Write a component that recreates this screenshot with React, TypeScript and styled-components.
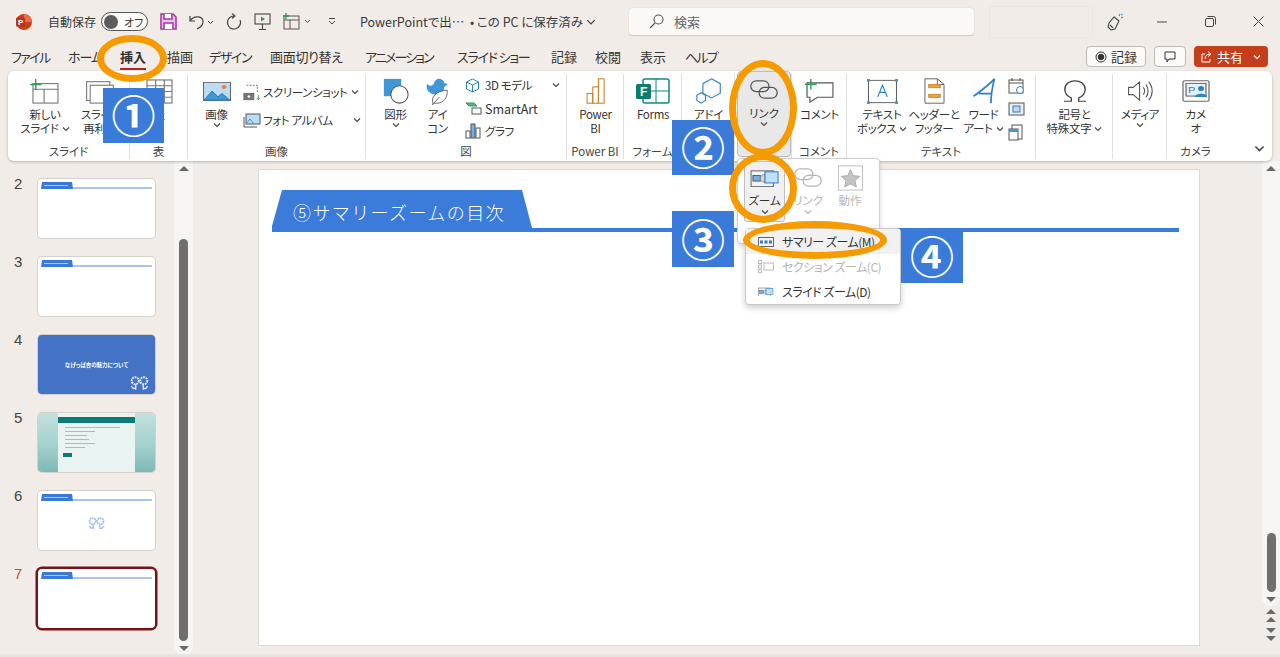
import React from "react";
import styled, { createGlobalStyle } from "styled-components";

const GlobalStyle = createGlobalStyle`
  html, body { margin: 0; padding: 0; height: 100%; overflow: hidden; }
  body {
    background: #f1ece7;
    color: #333;
    font-family: "Noto Sans CJK JP", "Noto Sans", sans-serif;
    font-feature-settings: "palt";
    font-size: 12px;
  }
`;

const Page = styled.div`
  position: relative;
  width: 1280px;
  height: 657px;
  overflow: hidden;
  display: flex;
  flex-direction: column;
`;

/* title bar */
const TitleBar = styled.div`
  height: 43px;
  display: flex;
  align-items: center;
  flex-shrink: 0;
`;
const TitleItem = styled.div<{ $w: number; $size?: number; $center?: boolean }>`
  width: ${(p) => p.$w}px;
  flex-shrink: 0;
  display: flex;
  align-items: center;
  justify-content: ${(p) => (p.$center ? "center" : "flex-start")};
  font-size: ${(p) => p.$size ?? 12}px;
  white-space: nowrap;
  color: #3a3a3a;
`;
const Toggle = styled.div`
  width: 47px;
  height: 19px;
  box-sizing: border-box;
  border: 1px solid #555;
  border-radius: 10px;
  background: #fbfaf9;
  display: flex;
  align-items: center;
  gap: 6px;
  padding-left: 2px;
  font-size: 11px;
  &::before {
    content: "";
    width: 14px;
    height: 14px;
    border-radius: 50%;
    background: #5c5c5c;
  }
`;
const SearchBox = styled.div`
  width: 345px;
  height: 28px;
  box-sizing: border-box;
  background: #faf9f8;
  border-radius: 4px;
  border-bottom: 1px solid #d4d0cc;
  box-shadow: 0 0 1px #bbb;
  display: flex;
  align-items: center;
  gap: 10px;
  padding-left: 20px;
  color: #666;
  font-size: 13px;
`;
const GhostBox = styled.div`
  width: 102px;
  height: 30px;
  border: 1px solid #ebe6e1;
`;

/* tabs */
const TabBar = styled.div`
  height: 27px;
  display: flex;
  align-items: center;
  padding: 0 12px 1px 11px;
  flex-shrink: 0;
`;
const Tab = styled.div<{ $w: number; $ls: number; $active?: boolean }>`
  position: relative;
  width: ${(p) => p.$w}px;
  flex-shrink: 0;
  font-size: 13px;
  letter-spacing: ${(p) => p.$ls}px;
  white-space: nowrap;
  font-weight: ${(p) => (p.$active ? 700 : 400)};
  color: #333;
  ${(p) =>
    p.$active &&
    `&::after { content: ""; position: absolute; left: 0; top: 21px; width: 26px; height: 2px; background: #b7261a; }`}
`;
const TabActions = styled.div`
  margin-left: auto;
  display: flex;
  align-items: center;
  gap: 8px;
`;
const OutlineButton = styled.div<{ $w: number }>`
  width: ${(p) => p.$w}px;
  height: 21px;
  box-sizing: border-box;
  background: #fbfaf9;
  border: 1px solid #bdb9b5;
  border-radius: 4px;
  display: flex;
  align-items: center;
  justify-content: center;
  gap: 4px;
  font-size: 13px;
`;
const ShareButton = styled.div`
  width: 74px;
  height: 21px;
  box-sizing: border-box;
  background: #c43e1c;
  color: #fff;
  border-radius: 4px;
  display: flex;
  align-items: center;
  padding-left: 7px;
  gap: 4px;
  font-size: 13px;
`;

/* ribbon */
const Ribbon = styled.div`
  height: 90px;
  margin: 0 8px;
  flex-shrink: 0;
  background: #fff;
  border-radius: 6px;
  box-shadow: 0 1px 3px rgba(0, 0, 0, 0.25);
  display: flex;
  position: relative;
`;
const Group = styled.div<{ $w: number; $last?: boolean }>`
  width: ${(p) => p.$w}px;
  flex-shrink: 0;
  height: 85px;
  margin-top: 3px;
  box-sizing: border-box;
  border-right: ${(p) => (p.$last ? "none" : "1px solid #e1dfdd")};
  display: flex;
  flex-direction: column;
`;
const GroupBody = styled.div<{ $pad?: number }>`
  flex: 1;
  display: flex;
  padding-left: ${(p) => p.$pad ?? 0}px;
  min-height: 0;
`;
const GroupLabel = styled.div`
  height: 15px;
  line-height: 15px;
  text-align: center;
  font-size: 11.5px;
  color: #444;
  white-space: nowrap;
  overflow: hidden;
`;
const Tool = styled.div<{ $w: number }>`
  width: ${(p) => p.$w}px;
  flex-shrink: 0;
  display: flex;
  flex-direction: column;
  align-items: center;
  padding-top: 3px;
  font-size: 11.5px;
  line-height: 14px;
  letter-spacing: -0.3px;
  color: #333;
  text-align: center;
  white-space: nowrap;
`;
const ToolIcon = styled.div`
  height: 28px;
  display: flex;
  align-items: center;
  justify-content: center;
  margin-bottom: 2px;
`;
const ToolArrow = styled.span`
  display: inline-flex;
  margin-left: 3px;
`;
const Stack = styled.div<{ $w: number; $gap: number; $top: number; $left?: number }>`
  width: ${(p) => p.$w}px;
  flex-shrink: 0;
  display: flex;
  flex-direction: column;
  gap: ${(p) => p.$gap}px;
  padding-top: ${(p) => p.$top}px;
  margin-left: ${(p) => p.$left ?? 0}px;
`;
const StackRow = styled.div`
  height: 18px;
  display: flex;
  align-items: center;
  font-size: 11.5px;
  letter-spacing: -0.4px;
  white-space: nowrap;
`;
const StackIcon = styled.span`
  width: 20px;
  flex-shrink: 0;
  display: flex;
  align-items: center;
  justify-content: flex-start;
`;
const StackEnd = styled.span`
  margin-left: auto;
  display: flex;
`;
const LatinLabel = styled.span`
  font-size: 12.5px;
  letter-spacing: 0;
`;
const Collapse = styled.div`
  position: absolute;
  right: 7px;
  bottom: 7px;
  display: flex;
`;

/* main */
const Main = styled.div`
  flex: 1;
  display: flex;
  min-height: 0;
  border-bottom: 3px solid #e9e4df;
`;
const SlideList = styled.div`
  width: 174px;
  flex-shrink: 0;
  display: flex;
  flex-direction: column;
  gap: 19px;
  padding-top: 18px;
`;
const ThumbRow = styled.div`
  display: flex;
  height: 59px;
  position: relative;
  padding-left: 38px;
`;
const ThumbNo = styled.div<{ $active?: boolean }>`
  position: absolute;
  left: 14px;
  top: -4px;
  font-size: 15px;
  font-family: "Liberation Sans", sans-serif;
  color: ${(p) => (p.$active ? "#d04a2b" : "#444")};
`;
const Thumb = styled.div<{ $variant?: "blue" | "teal"; $active?: boolean }>`
  width: 117px;
  height: 59px;
  box-sizing: border-box;
  background: ${(p) =>
    p.$variant === "blue"
      ? "#4472c4"
      : p.$variant === "teal"
        ? "linear-gradient(180deg, #c3e0dd 0%, #a4d1cd 55%, #7fb9b5 100%)"
        : "#fff"};
  border-radius: 4px;
  box-shadow: ${(p) => (p.$active ? "0 0 0 2.5px #76131a" : "0 0 0 1px #d5d0cb")};
  display: flex;
  flex-direction: column;
  align-items: ${(p) => (p.$variant ? "center" : "stretch")};
  justify-content: ${(p) => (p.$variant === "blue" ? "center" : "flex-start")};
  position: relative;
  overflow: hidden;
`;
const MiniHead = styled.div`
  display: flex;
  align-items: flex-end;
  margin: 3px 3px 0 3px;
`;
const MiniTab = styled.div`
  width: 32px;
  height: 7px;
  flex-shrink: 0;
  box-sizing: border-box;
  background: #3b79d8;
  clip-path: polygon(1px 0, 31px 0, 32px 100%, 0 100%);
  padding: 3px 5px 0 3px;
  &::after {
    content: "";
    display: block;
    height: 1px;
    background: rgba(255, 255, 255, 0.6);
  }
`;
const MiniLine = styled.div`
  flex: 1;
  height: 2px;
  background: #a9c5ef;
`;
const MiniCentre = styled.div`
  flex: 1;
  display: flex;
  align-items: center;
  justify-content: center;
  padding-bottom: 5px;
`;
const CoverTitle = styled.div`
  color: #fff;
  font-size: 5.5px;
  font-weight: 700;
`;
const CornerMark = styled.div`
  position: absolute;
  right: 6px;
  bottom: 4px;
  display: flex;
`;
const QuizCard = styled.div`
  width: 77px;
  height: 59px;
  background: #e8f3f2;
  display: flex;
  flex-direction: column;
  gap: 3px;
`;
const QuizHead = styled.div`
  height: 6px;
  background: #0d7a75;
  margin-bottom: 1px;
  margin-top: 4px;
`;
const QuizLine = styled.div<{ $w: number }>`
  width: ${(p) => p.$w}px;
  height: 1px;
  background: #a9bdbb;
  margin-left: 7px;
`;
const QuizBtn = styled.div`
  width: 9px;
  height: 4px;
  background: #0d7a75;
  margin: 2px 0 0 5px;
`;
const ScrollTrack = styled.div<{ $top: number; $h?: number; $w: number }>`
  width: ${(p) => p.$w}px;
  flex-shrink: 0;
  background: #f6f5f4;
  border-radius: 0 0 8px 8px;
  display: flex;
  flex-direction: column;
  align-items: center;
  ${(p) => (p.$h ? `height: ${p.$h}px;` : "")}
  padding-top: ${(p) => p.$top}px;
  box-sizing: border-box;
`;
const ScrollThumb = styled.div<{ $top: number; $h: number }>`
  width: 9px;
  height: ${(p) => p.$h}px;
  margin-top: ${(p) => p.$top}px;
  border-radius: 5px;
  background: #6f6f6f;
  flex-shrink: 0;
`;
const Arrow = styled.div<{ $down?: boolean; $top?: number }>`
  width: 0;
  height: 0;
  flex-shrink: 0;
  margin-top: ${(p) => p.$top ?? 0}px;
  border-left: 5px solid transparent;
  border-right: 5px solid transparent;
  ${(p) =>
    p.$down ? "border-top: 5px solid #6a6a6a;" : "border-bottom: 5px solid #6a6a6a;"}
`;
const WorkArea = styled.div`
  flex: 1;
  padding: 8px 0 0 65px;
`;
const SlideSheet = styled.div`
  width: 942px;
  height: 477px;
  box-sizing: border-box;
  background: #fff;
  border: 1px solid #dcd8d3;
  padding: 20px 20px 0 13px;
`;
const SlideHead = styled.div`
  display: flex;
  align-items: flex-end;
`;
const SlideTab = styled.div`
  width: 260px;
  height: 42px;
  flex-shrink: 0;
  box-sizing: border-box;
  background: #3b7bd9;
  clip-path: polygon(10px 0, 250px 0, 260px 38px, 260px 42px, 0 42px, 0 36px);
  color: #fff;
  font-size: 18px;
  line-height: 44px;
  padding-left: 21px;
  font-feature-settings: normal;
  font-weight: 300;
  letter-spacing: 1.4px;
  white-space: nowrap;
`;
const SlideLine = styled.div`
  flex: 1;
  height: 4px;
  background: #3b7bd9;
`;
const RightRail = styled.div`
  width: 18px;
  flex-shrink: 0;
  display: flex;
  flex-direction: column;
  align-items: center;
`;
const DoubleArrows = styled.div`
  display: flex;
  flex-direction: column;
  align-items: center;
  margin-top: 3px;
  gap: 3px;
`;

/* call-outs that sit over the ribbon */
const Over = styled.div<{ $x: number; $y: number; $w: number; $h: number }>`
  position: absolute;
  left: ${(p) => p.$x}px;
  top: ${(p) => p.$y}px;
  width: ${(p) => p.$w}px;
  height: ${(p) => p.$h}px;
  box-sizing: border-box;
`;
const StepBox = styled(Over)`
  background: #3a7bd9;
  color: #fff;
  font-size: 44px;
  line-height: ${(p) => p.$h - 2}px;
  font-weight: 700;
  font-feature-settings: normal;
  text-align: center;
  z-index: 6;
`;
const Ring = styled(Over)`
  border: 7px solid #f59b00;
  border-radius: 50%;
  z-index: 7;
`;
const LinkHighlight = styled(Over)`
  background: #e8e8e8;
  border: 1px solid #bdbdbd;
  border-radius: 4px;
  z-index: 1;
  display: flex;
  flex-direction: column;
  align-items: center;
  font-size: 11.5px;
  line-height: 14px;
  padding-top: 4px;
`;
const LinkIconBox = styled.div`
  height: 28px;
  display: flex;
  align-items: center;
  margin-bottom: 2px;
`;
const LinkPanel = styled(Over)`
  background: #fff;
  border: 1px solid #cfcfcf;
  border-radius: 4px;
  box-shadow: 0 2px 5px rgba(0, 0, 0, 0.16);
  z-index: 3;
  display: flex;
  padding: 2px 0 0 6px;
  gap: 4px;
`;
const PanelTool = styled.div<{ $w: number; $selected?: boolean; $off?: boolean }>`
  width: ${(p) => p.$w}px;
  height: 61px;
  box-sizing: border-box;
  background: ${(p) => (p.$selected ? "#f0f0f0" : "transparent")};
  border: ${(p) => (p.$selected ? "1px solid #bdbdbd" : "1px solid transparent")};
  border-radius: 3px;
  color: ${(p) => (p.$off ? "#b5b5b5" : "#333")};
  display: flex;
  flex-direction: column;
  align-items: center;
  font-size: 11.5px;
  line-height: 15px;
  padding-top: 1px;
  white-space: nowrap;
`;
const PanelIcon = styled.div`
  height: 30px;
  display: flex;
  align-items: center;
  justify-content: center;
`;
const ZoomMenu = styled(Over)`
  background: #fff;
  border: 1px solid #c9c9c9;
  border-radius: 4px;
  box-shadow: 0 3px 6px rgba(0, 0, 0, 0.2);
  z-index: 4;
  display: flex;
  flex-direction: column;
`;
const MenuItem = styled.div<{ $hover?: boolean; $off?: boolean }>`
  height: 25px;
  display: flex;
  align-items: center;
  gap: 8px;
  padding-left: 12px;
  background: ${(p) => (p.$hover ? "#f1f1f1" : "transparent")};
  color: ${(p) => (p.$off ? "#b5b5b5" : "#333")};
  font-size: 12px;
  letter-spacing: -0.5px;
  white-space: nowrap;
`;

const Chevron = ({ size = 8, color = "#444" }: { size?: number; color?: string }) => (
  <svg width={size} height={size} viewBox="0 0 8 8" fill="none" stroke={color} strokeWidth="1.1">
    <path d="M1 2.5 4 5.5 7 2.5" />
  </svg>
);

const Flower = ({ color, size }: { color: string; size: number }) => (
  <svg width={size} height={size * 0.75} viewBox="0 0 40 30" fill="none" stroke={color} strokeWidth="4">
    <circle cx="11" cy="10" r="7.500" strokeDasharray="4 1.500" />
    <circle cx="29" cy="10" r="7.500" strokeDasharray="4 1.500" />
    <path d="M3 21c3 6 6 7 9 3M12 18v11M28 18v11M28 25c3 3 6 2 9-4" strokeWidth="3" />
  </svg>
);

const LinkIcon = ({ color = "#555", w = 28 }: { color?: string; w?: number }) => (
  <svg width={w} height={w * 0.68} viewBox="0 0 34 23" fill="none" stroke={color} strokeWidth="1.500">
    <rect x="1" y="1" width="22" height="13" rx="6.500" />
    <rect x="11" y="9" width="22" height="13" rx="6.500" />
  </svg>
);

const ZoomGlyph = ({ w = 30, color = "#5a5a5a" }: { w?: number; color?: string }) => (
  <svg width={w} height={w * 0.62} viewBox="0 0 32 20" fill="none">
    <rect x="1" y="2" width="24" height="17" fill="#f3f3f3" stroke={color} />
    <rect x="3" y="7" width="8" height="6" fill="#6fb1e6" stroke={color} />
    <path d="M11 8l5-3v10l-5-3z" fill="#d5d5d5" stroke={color} strokeWidth=".6" />
    <rect x="16" y="3" width="14" height="12" fill="#bfe0f7" stroke="#3a87c8" strokeWidth="1.200" />
  </svg>
);

const tabs: [string, number, number][] = [
  ["ファイル", 57, -1.6],
  ["ホーム", 52, -1],
  ["挿入", 47, 0],
  ["描画", 42, 0],
  ["デザイン", 61, -1.4],
  ["画面切り替え", 95, -0.3],
  ["アニメーション", 92, -1.9],
  ["スライド ショー", 94, -1.2],
  ["記録", 44, 0],
  ["校閲", 45, 0],
  ["表示", 45, 0],
  ["ヘルプ", 40, -1.8],
];

const App = () => {
  return (
    <>
      <GlobalStyle />
      <Page>
        <TitleBar>
          <TitleItem $w={48} $center>
            <svg width="18" height="18" viewBox="0 0 18 18">
              <circle cx="9" cy="9" r="8" fill="#c9401f" />
              <path d="M9 1a8 8 0 0 1 8 8H9z" fill="#ed6c47" />
              <rect x="1" y="4.500" width="9" height="9" rx="1" fill="#b7351a" />
              <text x="3" y="12" fontSize="8" fontWeight="700" fill="#fff" fontFamily="Liberation Sans">P</text>
            </svg>
          </TitleItem>
          <TitleItem $w={53}>自動保存</TitleItem>
          <TitleItem $w={59}>
            <Toggle>オフ</Toggle>
          </TitleItem>
          <TitleItem $w={28}>
            <svg width="17" height="17" viewBox="0 0 17 17" fill="none" stroke="#a53aa3" strokeWidth="1.600">
              <path d="M1 1h12l3 3v12H1z" fill="#e9c3e8" />
              <path d="M4 1v5h8V1M4 16v-6h9v6" fill="#fff" />
            </svg>
          </TitleItem>
          <TitleItem $w={37}>
            <svg width="26" height="16" viewBox="0 0 26 16" fill="none" stroke="#444" strokeWidth="1.200">
              <path d="M2 2v5h5M2 7c3-5 12-6 13 0 .6 4-3 6.500-6 8" />
              <path d="M20 7l2.500 2.500L25 7" strokeWidth="1" />
            </svg>
          </TitleItem>
          <TitleItem $w={29}>
            <svg width="18" height="17" viewBox="0 0 18 17" fill="none" stroke="#444" strokeWidth="1.200">
              <path d="M9 3a6.500 6.500 0 1 0 6 4M7 .5 10 3 7 5.500" />
            </svg>
          </TitleItem>
          <TitleItem $w={28}>
            <svg width="17" height="18" viewBox="0 0 17 18" fill="none" stroke="#444" strokeWidth="1.100">
              <rect x="1" y="1" width="15" height="10" />
              <path d="M8.500 11v5M5 16.500h7" />
              <path d="M7 3.500v5l4-2.500z" fill="#2e9b59" stroke="none" />
            </svg>
          </TitleItem>
          <TitleItem $w={46}>
            <svg width="30" height="17" viewBox="0 0 30 17" fill="none" stroke="#555" strokeWidth="1">
              <rect x="2" y="3" width="15" height="13" />
              <path d="M2 7h15M8 7v9" />
              <path d="M4 0v6M1 3h6" stroke="#2e9b59" strokeWidth="1.300" />
              <path d="M23 7l2.500 2.500L28 7" />
            </svg>
          </TitleItem>
          <TitleItem $w={32}>
            <svg width="8" height="10" viewBox="0 0 8 10" fill="none" stroke="#444">
              <path d="M1 1.500h6M1 4l3 3 3-3" />
            </svg>
          </TitleItem>
          <TitleItem $w={269} $size={12.500}>
            PowerPointで出⋯&nbsp;&nbsp;• この PC に保存済み&nbsp;
            <Chevron size={10} />
          </TitleItem>
          <SearchBox>
            <svg width="15" height="15" viewBox="0 0 15 15" fill="none" stroke="#555" strokeWidth="1.100">
              <circle cx="9.500" cy="5.500" r="4.500" />
              <path d="M6 9 1 14" />
            </svg>
            検索
          </SearchBox>
          <TitleItem $w={15} />
          <GhostBox />
          <TitleItem $w={13} />
          <TitleItem $w={51}>
            <svg width="18" height="18" viewBox="0 0 18 18" fill="none" stroke="#444" strokeWidth="1.100">
              <path d="M8 4l5 4-4 8-4 1-3-3 1-4z" />
              <path d="M4 12l3 3" />
              <path d="M13 3l1-2M15 5l2-1M15.500 2l1-1" stroke="#3a87c8" />
            </svg>
          </TitleItem>
          <TitleItem $w={48}>
            <svg width="10" height="2" viewBox="0 0 10 2"><path d="M0 1h10" stroke="#444" /></svg>
          </TitleItem>
          <TitleItem $w={48}>
            <svg width="11" height="11" viewBox="0 0 11 11" fill="none" stroke="#444">
              <rect x=".5" y="2.500" width="8" height="8" rx="1.500" />
              <path d="M2.500.5h6a2 2 0 0 1 2 2v6" />
            </svg>
          </TitleItem>
          <TitleItem $w={20}>
            <svg width="11" height="11" viewBox="0 0 11 11" stroke="#444">
              <path d="M.5.5l10 10M10.500.5l-10 10" />
            </svg>
          </TitleItem>
        </TitleBar>

        <TabBar>
          {tabs.map(([label, w, ls]) => (
            <Tab key={label} $w={w} $ls={ls} $active={label === "挿入"}>
              {label}
            </Tab>
          ))}
          <TabActions>
            <OutlineButton $w={60}>
              <svg width="12" height="12" viewBox="0 0 12 12" fill="none" stroke="#333">
                <circle cx="6" cy="6" r="5" />
                <circle cx="6" cy="6" r="2.800" fill="#333" />
              </svg>
              記録
            </OutlineButton>
            <OutlineButton $w={32}>
              <svg width="12" height="12" viewBox="0 0 12 12" fill="none" stroke="#333">
                <path d="M1 1h10v7H5L3 11V8H1z" />
              </svg>
            </OutlineButton>
            <ShareButton>
              <svg width="12" height="12" viewBox="0 0 12 12" fill="none" stroke="#fff">
                <path d="M4 3H1v8h8V8M4 8c0-3 2-5 5-5M7 .5 10 3 7 5.500" />
              </svg>
              共有&nbsp;&nbsp;
              <Chevron color="#fff" />
            </ShareButton>
          </TabActions>
        </TabBar>

        <Ribbon>
          <Group $w={122}>
            <GroupBody $pad={7}>
              <Tool $w={60}>
                <ToolIcon>
                  <svg width="30" height="25" viewBox="0 0 32 27" fill="none" stroke="#777" strokeWidth="1.200">
                    <rect x="3" y="5" width="27" height="21" />
                    <path d="M3 11h27M15 11v15" />
                    <path d="M6 0v12M0 6h12" stroke="#2e9b59" strokeWidth="1.500" />
                  </svg>
                </ToolIcon>
                新しい
                <span>
                  スライド
                  <ToolArrow>
                    <Chevron />
                  </ToolArrow>
                </span>
              </Tool>
              <Tool $w={50}>
                <ToolIcon>
                  <svg width="30" height="25" viewBox="0 0 32 28" fill="none" stroke="#777" strokeWidth="1.200">
                    <rect x="1" y="3" width="26" height="21" />
                    <rect x="5" y="7" width="26" height="20" fill="#fff" />
                  </svg>
                </ToolIcon>
                スライド
                <br />
                再利用
              </Tool>
            </GroupBody>
            <GroupLabel>スライド</GroupLabel>
          </Group>
          <Group $w={58}>
            <GroupBody>
              <Tool $w={58}>
                <ToolIcon>
                  <svg width="27" height="25" viewBox="0 0 28 26" fill="none" stroke="#777" strokeWidth="1.200">
                    <rect x="1" y="1" width="26" height="24" />
                    <path d="M1 7h26M1 13h26M1 19h26M10 1v24M19 1v24" />
                  </svg>
                </ToolIcon>
                表
                <Chevron />
              </Tool>
            </GroupBody>
            <GroupLabel>表</GroupLabel>
          </Group>
          <Group $w={178}>
            <GroupBody $pad={7}>
              <Tool $w={43}>
                <ToolIcon>
                  <svg width="28" height="19" viewBox="0 0 28 23" fill="none" preserveAspectRatio="none">
                    <rect x=".5" y=".5" width="27" height="22" fill="#bcdcf5" stroke="#666" />
                    <path d="M1 22 9 11l6 7 4-4 8 8z" fill="#3f97d8" stroke="#2b6ea5" />
                    <circle cx="21" cy="6" r="2.500" fill="#e8843a" />
                  </svg>
                </ToolIcon>
                画像
                <Chevron />
              </Tool>
              <Stack $w={118} $gap={10} $top={9} $left={5}>
                <StackRow>
                  <StackIcon>
                    <svg width="18" height="17" viewBox="0 0 20 18" fill="none" stroke="#666">
                      <path d="M4 1h12v9" strokeDasharray="2 1.500" />
                      <rect x="1" y="10" width="11" height="7" fill="#777" />
                      <circle cx="6.500" cy="13.500" r="2" fill="#fff" />
                      <path d="M17 12v5M15 15l2 2 2-2" stroke="#2e9b59" />
                    </svg>
                  </StackIcon>
                  スクリーンショット
                  <ToolArrow>
                    <Chevron />
                  </ToolArrow>
                </StackRow>
                <StackRow>
                  <StackIcon>
                    <svg width="18" height="15" viewBox="0 0 18 15" fill="none" stroke="#555">
                      <rect x="3" y="1" width="14" height="10" fill="#bcdcf5" />
                      <path d="M1 4v10h13" />
                      <path d="M3 11l4-5 4 5" stroke="#3f97d8" />
                    </svg>
                  </StackIcon>
                  フォト アルバム
                  <StackEnd>
                    <Chevron />
                  </StackEnd>
                </StackRow>
              </Stack>
            </GroupBody>
            <GroupLabel>画像</GroupLabel>
          </Group>
          <Group $w={201}>
            <GroupBody $pad={8}>
              <Tool $w={43}>
                <ToolIcon>
                  <svg width="28" height="26" viewBox="0 0 30 30">
                    <rect x="1" y="1" width="20" height="20" fill="#3f97d8" />
                    <circle cx="19" cy="19" r="10" fill="#fff" stroke="#555" strokeWidth="1.200" />
                  </svg>
                </ToolIcon>
                図形
                <Chevron />
              </Tool>
              <Tool $w={41}>
                <ToolIcon>
                  <svg width="27" height="28" viewBox="0 0 30 32">
                    <path d="M3 8c5 4 6 1 8 0 0-4 5-8 9-5 2 1 3 3 3 4l4 1-4 3c0 5-5 9-11 9C6 20 1 14 3 8z" fill="#3f97d8" />
                    <path d="M10 31c-3-8 3-15 16-16 1 8-4 15-12 15-2 0-3 0-4 1zM9 32l8-9" fill="#fff" stroke="#555" />
                  </svg>
                </ToolIcon>
                アイ
                <br />
                コン
              </Tool>
              <Stack $w={95} $gap={5} $top={2} $left={7}>
                <StackRow>
                  <StackIcon>
                    <svg width="15" height="15" viewBox="0 0 15 15" fill="none" stroke="#2e82c4">
                      <path d="M7.500 1l6 3v7l-6 3-6-3V4zM1.500 4l6 3 6-3M7.500 7v7" />
                    </svg>
                  </StackIcon>
                  3D モデル
                  <StackEnd>
                    <Chevron />
                  </StackEnd>
                </StackRow>
                <StackRow>
                  <StackIcon>
                    <svg width="17" height="13" viewBox="0 0 17 13" fill="none" stroke="#555">
                      <path d="M1 1h8l3 3H4z" fill="#55b38a" stroke="#2e9b59" />
                      <rect x="7" y="6" width="9" height="6" fill="#fff" />
                    </svg>
                  </StackIcon>
                  <LatinLabel>SmartArt</LatinLabel>
                </StackRow>
                <StackRow>
                  <StackIcon>
                    <svg width="17" height="16" viewBox="0 0 17 16" fill="none" stroke="#555">
                      <rect x="1" y="8" width="4" height="7" />
                      <rect x="6" y="1" width="4" height="14" fill="#6fb1e6" />
                      <rect x="11" y="5" width="4" height="10" />
                    </svg>
                  </StackIcon>
                  グラフ
                </StackRow>
              </Stack>
            </GroupBody>
            <GroupLabel>図</GroupLabel>
          </Group>
          <Group $w={57}>
            <GroupBody>
              <Tool $w={57}>
                <ToolIcon>
                  <svg width="22" height="26" viewBox="0 0 24 32" fill="none" stroke="#c9822b" strokeWidth="1.300">
                    <rect x="1" y="19" width="7" height="12" />
                    <rect x="8" y="11" width="7" height="20" />
                    <rect x="15" y="1" width="7" height="30" />
                  </svg>
                </ToolIcon>
                Power
                <br />
                BI
              </Tool>
            </GroupBody>
            <GroupLabel>Power BI</GroupLabel>
          </Group>
          <Group $w={58}>
            <GroupBody>
              <Tool $w={58}>
                <ToolIcon>
                  <svg width="34" height="26" viewBox="0 0 34 26">
                    <rect x="7" y="1" width="26" height="24" rx="2" fill="#fff" stroke="#0f8a7e" strokeWidth="1.500" />
                    <path d="M7 13h26M20 1v24" stroke="#0f8a7e" />
                    <rect x="0" y="6" width="15" height="15" rx="1.500" fill="#0f7b6c" />
                    <text x="4" y="18" fontSize="12" fontWeight="700" fill="#fff" fontFamily="Liberation Sans">F</text>
                  </svg>
                </ToolIcon>
                Forms
              </Tool>
            </GroupBody>
            <GroupLabel>フォーム</GroupLabel>
          </Group>
          <Group $w={53}>
            <GroupBody>
              <Tool $w={53}>
                <ToolIcon>
                  <svg width="28" height="26" viewBox="0 0 30 30" fill="none" stroke="#2e82c4" strokeWidth="1.300">
                    <path d="M18 1l10 5.500v11L18 23 8 17.500v-11z" />
                    <path d="M6 17l5 3v6l-5 3-5-3v-6z" />
                  </svg>
                </ToolIcon>
                アドイ
                <br />ン
              </Tool>
            </GroupBody>
            <GroupLabel>アドイン</GroupLabel>
          </Group>
          <Group $w={57}>
            <GroupBody />
            <GroupLabel>&nbsp;</GroupLabel>
          </Group>
          <Group $w={55}>
            <GroupBody>
              <Tool $w={55}>
                <ToolIcon>
                  <svg width="31" height="24" viewBox="0 0 32 25" fill="none" stroke="#555" strokeWidth="1.200">
                    <path d="M3 4h27v15H14l-8 5v-5H3z" />
                    <path d="M7 0v11M1 5.500h12" stroke="#2e9b59" strokeWidth="1.500" />
                  </svg>
                </ToolIcon>
                コメント
              </Tool>
            </GroupBody>
            <GroupLabel>コメント</GroupLabel>
          </Group>
          <Group $w={189}>
            <GroupBody $pad={8}>
              <Tool $w={54}>
                <ToolIcon>
                  <svg width="31" height="25" viewBox="0 0 32 28" fill="none" preserveAspectRatio="none">
                    <rect x="1.500" y="1.500" width="29" height="25" stroke="#555" />
                    <path d="M11 20l5-13 5 13M13 15h6" stroke="#2e82c4" strokeWidth="1.200" />
                    <g fill="#3f97d8">
                      <rect x="0" y="0" width="3" height="3" />
                      <rect x="29" y="0" width="3" height="3" />
                      <rect x="0" y="25" width="3" height="3" />
                      <rect x="29" y="25" width="3" height="3" />
                    </g>
                  </svg>
                </ToolIcon>
                テキスト
                <span>
                  ボックス
                  <ToolArrow>
                    <Chevron />
                  </ToolArrow>
                </span>
              </Tool>
              <Tool $w={50}>
                <ToolIcon>
                  <svg width="21" height="26" viewBox="0 0 22 32" fill="none" stroke="#555" preserveAspectRatio="none">
                    <path d="M1 1h13l7 7v23H1z" />
                    <path d="M14 1v7h7" />
                    <rect x="5" y="8" width="12" height="4" fill="#e8a33a" stroke="#c9822b" />
                    <rect x="5" y="20" width="12" height="4" fill="#e8a33a" stroke="#c9822b" />
                  </svg>
                </ToolIcon>
                ヘッダーと
                <br />
                フッター
              </Tool>
              <Tool $w={49}>
                <ToolIcon>
                  <svg width="26" height="26" viewBox="0 0 28 30" fill="none" stroke="#2e82c4" strokeWidth="2">
                    <path d="M2 21C10 15 20 8 26 1c-2 8-4 18-4 28M8 18h14" />
                  </svg>
                </ToolIcon>
                ワード
                <span>
                  アート
                  <ToolArrow>
                    <Chevron />
                  </ToolArrow>
                </span>
              </Tool>
              <Stack $w={20} $gap={5} $top={3}>
                <StackRow>
                  <svg width="17" height="17" viewBox="0 0 17 17" fill="none" stroke="#555">
                    <rect x="1" y="2" width="14" height="13" />
                    <path d="M1 5h14M4 0v3M12 0v3" />
                    <circle cx="12" cy="12" r="3.500" fill="#fff" stroke="#2e82c4" />
                  </svg>
                </StackRow>
                <StackRow>
                  <svg width="17" height="14" viewBox="0 0 17 14" fill="none" stroke="#555">
                    <rect x="1" y="1" width="15" height="12" fill="#eee" />
                    <rect x="5" y="4" width="7" height="6" fill="#bcdcf5" stroke="#2e82c4" />
                  </svg>
                </StackRow>
                <StackRow>
                  <svg width="15" height="17" viewBox="0 0 15 17" fill="none" stroke="#555">
                    <rect x="4" y="1" width="10" height="14" fill="#fff" />
                    <rect x="1" y="5" width="9" height="11" fill="#fff" />
                    <rect x="1" y="5" width="9" height="3" fill="#3f97d8" stroke="none" />
                  </svg>
                </StackRow>
              </Stack>
            </GroupBody>
            <GroupLabel>テキスト</GroupLabel>
          </Group>
          <Group $w={77}>
            <GroupBody>
              <Tool $w={77}>
                <ToolIcon>
                  <svg width="24" height="22" viewBox="0 0 26 28" fill="none" stroke="#444" strokeWidth="1.500" preserveAspectRatio="none">
                    <path d="M1 27h8v-4C4 20 2 16 2 12 2 5 7 1 13 1s11 4 11 11c0 4-2 8-7 11v4h8" />
                  </svg>
                </ToolIcon>
                記号と
                <span>
                  特殊文字
                  <ToolArrow>
                    <Chevron />
                  </ToolArrow>
                </span>
              </Tool>
            </GroupBody>
            <GroupLabel>&nbsp;</GroupLabel>
          </Group>
          <Group $w={54}>
            <GroupBody>
              <Tool $w={54}>
                <ToolIcon>
                  <svg width="27" height="22" viewBox="0 0 28 24" fill="none" stroke="#555" strokeWidth="1.200">
                    <path d="M1 8h5l7-6v20l-7-6H1zM17 8c2 2 2 6 0 8M20 5c3 4 3 10 0 14M23 2c5 6 5 14 0 20" />
                  </svg>
                </ToolIcon>
                メディア
                <Chevron />
              </Tool>
            </GroupBody>
            <GroupLabel>&nbsp;</GroupLabel>
          </Group>
          <Group $w={57} $last>
            <GroupBody>
              <Tool $w={57}>
                <ToolIcon>
                  <svg width="28" height="22" viewBox="0 0 28 26" fill="none" stroke="#666" strokeWidth="1.200" preserveAspectRatio="none">
                    <rect x="1" y="1" width="26" height="24" rx="1.500" />
                    <rect x="4" y="4" width="20" height="15" fill="#e6f1fa" />
                    <text x="6" y="15" fontSize="11" fill="#2e82c4" stroke="none" fontFamily="Liberation Sans">P</text>
                    <circle cx="19" cy="10" r="3" fill="#2e82c4" stroke="none" />
                    <path d="M13 20c0-5 12-5 12 0z" fill="#2e82c4" stroke="none" />
                  </svg>
                </ToolIcon>
                カメ
                <br />
                オ
              </Tool>
            </GroupBody>
            <GroupLabel>カメラ</GroupLabel>
          </Group>
          <Collapse>
            <Chevron size={11} />
          </Collapse>
        </Ribbon>

        <Main>
          <SlideList>
            <ThumbRow>
              <ThumbNo>2</ThumbNo>
              <Thumb>
                <MiniHead>
                  <MiniTab />
                  <MiniLine />
                </MiniHead>
              </Thumb>
            </ThumbRow>
            <ThumbRow>
              <ThumbNo>3</ThumbNo>
              <Thumb>
                <MiniHead>
                  <MiniTab />
                  <MiniLine />
                </MiniHead>
              </Thumb>
            </ThumbRow>
            <ThumbRow>
              <ThumbNo>4</ThumbNo>
              <Thumb $variant="blue">
                <CoverTitle>なげっぱ杏の魅力について</CoverTitle>
                <CornerMark>
                  <Flower color="#dfe8f7" size={19} />
                </CornerMark>
              </Thumb>
            </ThumbRow>
            <ThumbRow>
              <ThumbNo>5</ThumbNo>
              <Thumb $variant="teal">
                <QuizCard>
                  <QuizHead />
                  <QuizLine $w={55} />
                  <QuizLine $w={30} />
                  <QuizLine $w={22} />
                  <QuizLine $w={24} />
                  <QuizLine $w={30} />
                  <QuizLine $w={20} />
                  <QuizBtn />
                </QuizCard>
              </Thumb>
            </ThumbRow>
            <ThumbRow>
              <ThumbNo>6</ThumbNo>
              <Thumb>
                <MiniHead>
                  <MiniTab />
                  <MiniLine />
                </MiniHead>
                <MiniCentre>
                  <Flower color="#9cbcf0" size={17} />
                </MiniCentre>
              </Thumb>
            </ThumbRow>
            <ThumbRow>
              <ThumbNo $active>7</ThumbNo>
              <Thumb $active>
                <MiniHead>
                  <MiniTab />
                  <MiniLine />
                </MiniHead>
              </Thumb>
            </ThumbRow>
          </SlideList>
          <ScrollTrack $top={5} $w={19}>
            <Arrow />
            <ScrollThumb $top={68} $h={402} />
            <Arrow $down $top={5} />
          </ScrollTrack>
          <WorkArea>
            <SlideSheet>
              <SlideHead>
                <SlideTab>⑤サマリーズームの目次</SlideTab>
                <SlideLine />
              </SlideHead>
            </SlideSheet>
          </WorkArea>
          <RightRail>
            <ScrollTrack $top={5} $h={445} $w={18}>
              <Arrow />
              <ScrollThumb $top={362} $h={59} />
              <Arrow $down $top={5} />
            </ScrollTrack>
            <DoubleArrows>
              <Arrow />
              <Arrow />
              <Arrow $down $top={3} />
              <Arrow $down />
            </DoubleArrows>
          </RightRail>
        </Main>

        <LinkHighlight $x={737} $y={71} $w={54} $h={86}>
          <LinkIconBox>
            <LinkIcon />
          </LinkIconBox>
          リンク
          <Chevron />
        </LinkHighlight>
        <LinkPanel $x={737} $y={158} $w={143} $h={86}>
          <PanelTool $w={41} $selected>
            <PanelIcon>
              <ZoomGlyph />
            </PanelIcon>
            ズーム
            <Chevron />
          </PanelTool>
          <PanelTool $w={38} $off>
            <PanelIcon>
              <LinkIcon color="#b5b5b5" />
            </PanelIcon>
            リンク
            <Chevron color="#b5b5b5" />
          </PanelTool>
          <PanelTool $w={38} $off>
            <PanelIcon>
              <svg width="27" height="26" viewBox="0 0 28 28">
                <rect x="1" y="1" width="26" height="26" fill="none" stroke="#bbb" />
                <path d="M14 5l3 6.500 7 .7-5.200 4.600 1.500 7L14 20.200 7.700 23.800l1.500-7L4 12.200l7-.7z" fill="#c4c4c4" stroke="#aaa" />
              </svg>
            </PanelIcon>
            動作
          </PanelTool>
        </LinkPanel>
        <ZoomMenu $x={745} $y={228} $w={156} $h={77}>
          <MenuItem $hover>
            <svg width="16" height="10" viewBox="0 0 16 10">
              <rect x=".5" y=".5" width="15" height="9" fill="#f2f2f2" stroke="#666" />
              <rect x="2" y="3.500" width="3" height="3" fill="#2e82c4" />
              <rect x="6.500" y="3.500" width="3" height="3" fill="#2e82c4" />
              <rect x="11" y="3.500" width="3" height="3" fill="#2e82c4" />
            </svg>
            サマリー ズーム(M)
          </MenuItem>
          <MenuItem $off>
            <svg width="16" height="13" viewBox="0 0 16 13" fill="none" stroke="#bbb">
              <rect x=".5" y=".5" width="3" height="3" />
              <rect x=".5" y="5" width="3" height="3" />
              <rect x=".5" y="9.500" width="3" height="3" />
              <rect x="6" y="3" width="9.500" height="7" />
            </svg>
            セクション ズーム(C)
          </MenuItem>
          <MenuItem>
            <ZoomGlyph w={16} />
            スライド ズーム(D)
          </MenuItem>
        </ZoomMenu>

        <StepBox $x={103} $y={88} $w={61} $h={55}>①</StepBox>
        <StepBox $x={672} $y={120} $w={62} $h={55}>②</StepBox>
        <StepBox $x={672} $y={211} $w={62} $h={56}>③</StepBox>
        <StepBox $x={901} $y={230} $w={62} $h={53}>④</StepBox>

        <Ring $x={97} $y={35} $w={70} $h={47} />
        <Ring $x={729} $y={60} $w={68} $h={96} />
        <Ring $x={729} $y={153} $w={68} $h={70} />
        <Ring $x={743} $y={221} $w={144} $h={38} />
      </Page>
    </>
  );
};

export default App;
